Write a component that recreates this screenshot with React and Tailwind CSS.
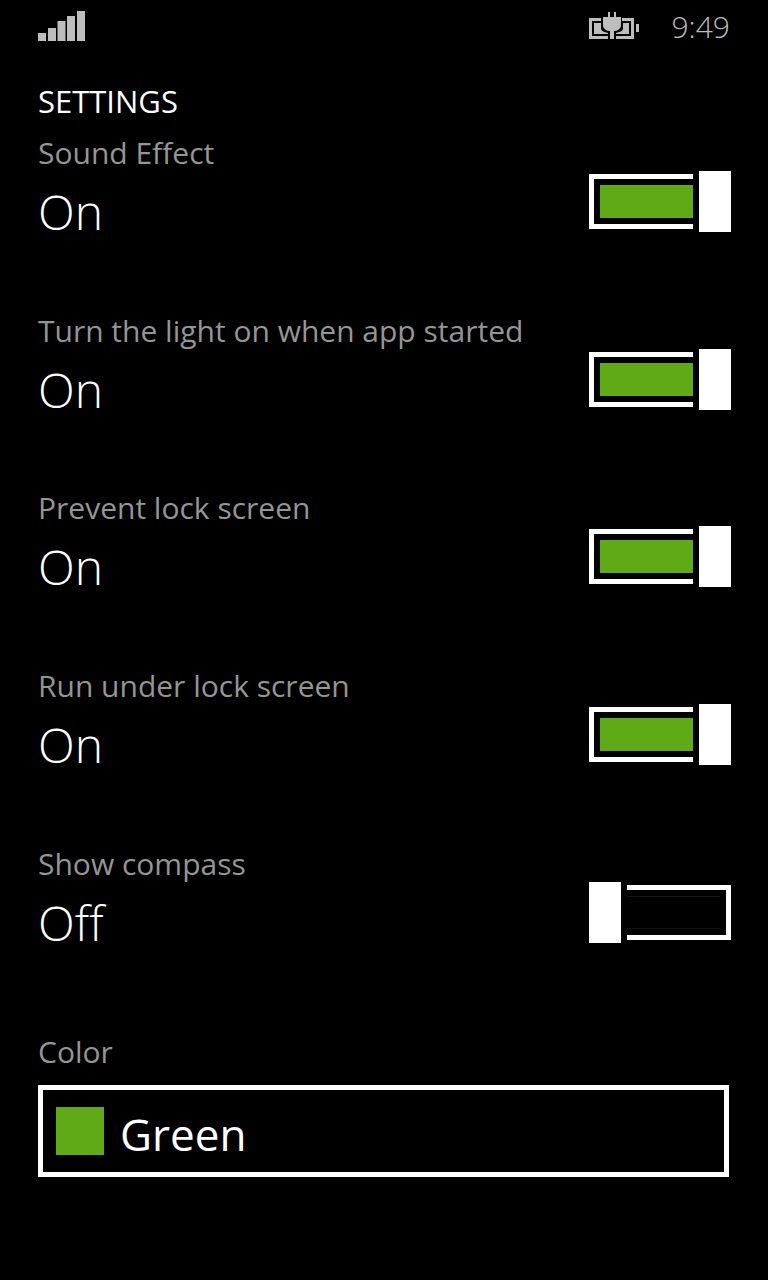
const font = { fontFamily: '"Open Sans", "Noto Sans", sans-serif' };

const settings = [
  { label: 'Sound Effect', on: true },
  { label: 'Turn the light on when app started', on: true },
  { label: 'Prevent lock screen', on: true },
  { label: 'Run under lock screen', on: true },
  { label: 'Show compass', on: false },
];

const SignalIcon = () => (
  <svg width="48" height="31" viewBox="0 0 48 31" className="block">
    <rect x="0" y="23" width="8" height="8" fill="#bdbdbd" />
    <rect x="10" y="18" width="8" height="13" fill="#bdbdbd" />
    <rect x="19.5" y="11" width="8" height="20" fill="#bdbdbd" />
    <rect x="29" y="6" width="8" height="25" fill="#bdbdbd" />
    <rect x="39" y="1" width="8" height="30" fill="#bdbdbd" />
  </svg>
);

const BatteryIcon = () => (
  <svg width="52" height="30" viewBox="0 0 52 30" className="block">
    {/* shell */}
    <path d="M0 7H12V10H3V25H19V28H0Z" fill="#bdbdbd" />
    <path d="M27 25H42V10H33V7H45V28H27Z" fill="#bdbdbd" />
    {/* charge level either side of the plug */}
    <path d="M5 12H12V17C12 20 15 21 19 22V23H5Z" fill="#bdbdbd" />
    <path d="M34 12H40V23H27V22C31 21 34 20 34 17Z" fill="#bdbdbd" />
    {/* plug */}
    <path d="M19 1H21V6H25V1H27V6H32V14C32 18 28 20 25 20V28H21V20C18 20 14 18 14 14V6H19Z" fill="#bdbdbd" />
    <rect x="47" y="13" width="3" height="8" fill="#bdbdbd" />
  </svg>
);

const Toggle = ({ on }) =>
  on ? (
    <div className="flex h-[61px] items-center gap-[6px]">
      <div className="flex h-[55px] w-[104px] items-center justify-end border-[5px] border-r-0 border-white pl-[6px]">
        <div className="h-[33px] w-full bg-[#60a917]" />
      </div>
      <div className="h-[61px] w-[32px] bg-white" />
    </div>
  ) : (
    <div className="flex h-[61px] items-center gap-[6px]">
      <div className="h-[61px] w-[32px] bg-white" />
      <div className="flex h-[55px] w-[104px] items-center border-[5px] border-l-0 border-white">
        <div className="h-[33px] w-[93px] border-y border-[#0e1a07]" />
      </div>
    </div>
  );

const SettingRow = ({ label, on }) => (
  <div className="flex h-[177.7px] items-start justify-between">
    <div>
      <div className="h-[36px] text-[30px] leading-[36px] text-[#959595]">{label}</div>
      <div className="h-[70px] pt-[6px] text-[48px] font-light leading-[70px] text-white">{on ? 'On' : 'Off'}</div>
    </div>
    <div className="mr-[37px] mt-[36px]">
      <Toggle on={on} />
    </div>
  </div>
);

export default function App() {
  return (
    <div className="h-[1280px] w-[768px] overflow-hidden bg-black" style={font}>
      {/* Status bar */}
      <div className="flex h-[53px] items-start justify-between pl-[38px] pr-[38px]">
        <div className="mt-[10px]">
          <SignalIcon />
        </div>
        <div className="flex items-start">
          <div className="mt-[11px]">
            <BatteryIcon />
          </div>
          <div className="ml-[30px] mt-[8px] text-[30px] font-light leading-[38px] text-[#bdbdbd]">9:49</div>
        </div>
      </div>

      <div className="pl-[38px]">
        <h1 className="h-[82px] pt-[30px] text-[31px] font-normal leading-[36px] text-white">SETTINGS</h1>
        <div>
          {settings.map((s) => (
            <SettingRow key={s.label} label={s.label} on={s.on} />
          ))}
        </div>
        <div className="pt-[11px] text-[30px] leading-[36px] text-[#959595]">Color</div>
        <div className="mt-[15px] flex h-[92px] w-[691px] items-center border-[5px] border-white pl-[13px]">
          <div className="h-[48px] w-[48px] bg-[#60a917]" />
          <div className="ml-[16px] pt-[6px] text-[44px] leading-[56px] text-white">Green</div>
        </div>
      </div>
    </div>
  );
}
